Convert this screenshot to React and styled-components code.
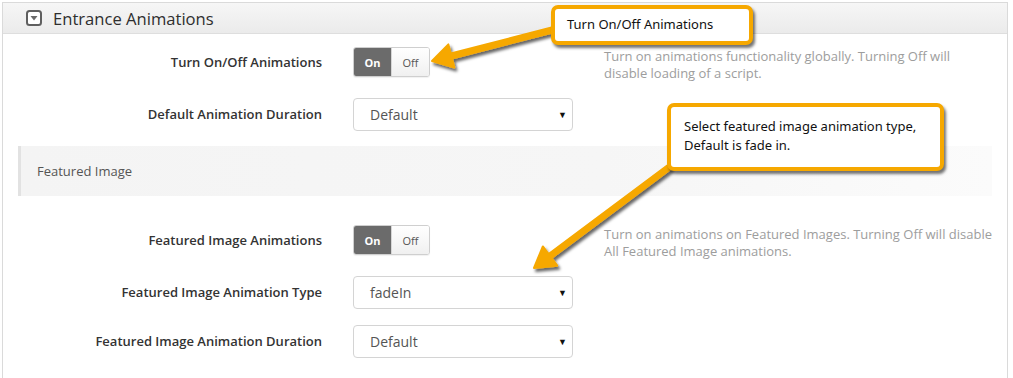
import React from 'react'
import styled, { createGlobalStyle } from 'styled-components'

const GlobalStyle = createGlobalStyle`
  html, body {
    margin: 0;
    padding: 0;
    background: #fff;
  }
  body {
    font-family: 'Open Sans', 'Noto Sans', sans-serif;
    color: #333;
  }
`

const Page = styled.div`
  position: relative;
  width: 1013px;
  height: 378px;
  overflow: hidden;
  padding: 2px 0 0 2px;
  box-sizing: border-box;
`

const Panel = styled.section`
  width: 1006px;
  height: 400px;
  border: 1px solid #dadada;
  box-sizing: border-box;
  background: #fff;
`

const Header = styled.header`
  display: flex;
  align-items: center;
  gap: 11px;
  height: 30px;
  padding-left: 23px;
  border-bottom: 1px solid #dedede;
  background: linear-gradient(#f6f6f6, #ebebeb);
`

const Title = styled.h2`
  margin: 0;
  font-size: 16.6px;
  font-weight: 400;
  color: #2e2e2e;
`

const Row = styled.div`
  display: grid;
  grid-template-columns: 319px 220px 392px;
  column-gap: 31px;
  align-items: start;
  margin-top: ${(p) => p.$mt}px;
`

const Label = styled.div`
  text-align: right;
  font-size: 13px;
  font-weight: 600;
  color: #333;
  line-height: ${(p) => p.$h}px;
`

const Toggle = styled.div`
  display: flex;
  width: 77px;
  height: 30px;
  border: 1px solid #cfcfcf;
  border-radius: 3px;
  overflow: hidden;
  box-sizing: border-box;
  box-shadow: 0 1px 1px rgba(0, 0, 0, 0.06);
`

const Segment = styled.span`
  flex: 1;
  display: flex;
  align-items: center;
  justify-content: center;
  font-size: 11px;
  font-weight: ${(p) => (p.$active ? 700 : 400)};
  color: ${(p) => (p.$active ? '#fff' : '#555')};
  background: ${(p) =>
    p.$active ? '#6b6b6b' : 'linear-gradient(#ffffff, #f0f0f0)'};
  & + & {
    border-left: 1px solid #d6d6d6;
  }
`

const Select = styled.div`
  display: flex;
  align-items: center;
  justify-content: space-between;
  height: 33px;
  padding: 0 5px 0 16px;
  border: 1px solid #d4d4d4;
  border-radius: 4px;
  box-sizing: border-box;
  font-size: 14px;
  color: #555;
  background: #fff;
`

const Caret = styled.span`
  font-size: 9px;
  color: #111;
`

const Description = styled.p`
  margin: 0;
  padding-top: 1px;
  font-size: 13px;
  line-height: 17px;
  color: #9d9d9d;
`

const Band = styled.div`
  display: flex;
  align-items: center;
  height: 50px;
  margin: 15px 15px 0;
  padding-left: 16px;
  border-left: 3px solid #e2e2e2;
  background: linear-gradient(90deg, #f4f4f4 0%, #f6f6f6 60%, #fbfbfb 100%);
  font-size: 13px;
  color: #555;
`

const Callout = styled.div`
  position: absolute;
  left: ${(p) => p.$x}px;
  top: ${(p) => p.$y}px;
  width: ${(p) => p.$w}px;
  height: ${(p) => p.$h}px;
  box-sizing: border-box;
  padding: ${(p) => p.$pad};
  border: 4px solid #f6a800;
  border-radius: 7px;
  background: #fff;
  box-shadow: 2px 3px 3px rgba(0, 0, 0, 0.55);
  font-family: 'Noto Sans', 'Open Sans', sans-serif;
  font-size: 13px;
  line-height: 19px;
  color: #111;
`

const Overlay = styled.svg`
  position: absolute;
  left: 0;
  top: 0;
  pointer-events: none;
`

function ExpandIcon() {
  return (
    <svg width="16" height="16" viewBox="0 0 16 16">
      <rect x="1" y="1" width="14" height="14" rx="2.5" fill="#fff" stroke="#5f5f5f" strokeWidth="2" />
      <path d="M4.5 6 L11.5 6 L8 10.5 Z" fill="#6a6a6a" />
    </svg>
  )
}

function OnOff() {
  return (
    <Toggle>
      <Segment $active>On</Segment>
      <Segment>Off</Segment>
    </Toggle>
  )
}

function Dropdown({ value }) {
  return (
    <Select>
      <span>{value}</span>
      <Caret>▼</Caret>
    </Select>
  )
}

function Arrow({ from, tip }) {
  const dx = tip[0] - from[0]
  const dy = tip[1] - from[1]
  const len = Math.hypot(dx, dy)
  const ux = dx / len
  const uy = dy / len
  const bx = tip[0] - ux * 20
  const by = tip[1] - uy * 20
  const nx = -uy * 12
  const ny = ux * 12
  return (
    <g filter="url(#shadow)">
      <line x1={from[0]} y1={from[1]} x2={bx + ux * 2} y2={by + uy * 2} stroke="#f6a800" strokeWidth="7" strokeLinecap="round" />
      <polygon
        points={`${tip[0]},${tip[1]} ${bx + nx},${by + ny} ${bx - nx},${by - ny}`}
        fill="#f6a800"
        stroke="#f6a800"
        strokeWidth="2"
        strokeLinejoin="round"
      />
    </g>
  )
}

export default function App() {
  return (
    <Page>
      <GlobalStyle />
      <Panel>
        <Header>
          <ExpandIcon />
          <Title>Entrance Animations</Title>
        </Header>

        <Row $mt={13}>
          <Label $h={30}>Turn On/Off Animations</Label>
          <OnOff />
          <Description>
            Turn on animations functionality globally. Turning Off will disable loading of a script.
          </Description>
        </Row>
        <Row $mt={16}>
          <Label $h={33}>Default Animation Duration</Label>
          <Dropdown value="Default" />
        </Row>

        <Band>Featured Image</Band>

        <Row $mt={29}>
          <Label $h={30}>Featured Image Animations</Label>
          <OnOff />
          <Description>
            Turn on animations on Featured Images. Turning Off will disable All Featured Image animations.
          </Description>
        </Row>
        <Row $mt={16}>
          <Label $h={33}>Featured Image Animation Type</Label>
          <Dropdown value="fadeIn" />
        </Row>
        <Row $mt={16}>
          <Label $h={33}>Featured Image Animation Duration</Label>
          <Dropdown value="Default" />
        </Row>
      </Panel>

      <Overlay width="1013" height="378">
        <defs>
          <filter id="shadow" x="-20%" y="-20%" width="140%" height="140%">
            <feDropShadow dx="2" dy="3" stdDeviation="1.5" floodColor="#000" floodOpacity="0.6" />
          </filter>
        </defs>
        <Arrow from={[556, 29]} tip={[432, 61]} />
        <Arrow from={[668, 168]} tip={[534, 268]} />
      </Overlay>

      <Callout $x={551} $y={5} $w={202} $h={40} $pad="6px 0 0 12px">
        Turn On/Off Animations
      </Callout>
      <Callout $x={667} $y={103} $w={277} $h={68} $pad="10px 0 0 13px">
        Select featured image animation type,
        <br />
        Default is fade in.
      </Callout>
    </Page>
  )
}
